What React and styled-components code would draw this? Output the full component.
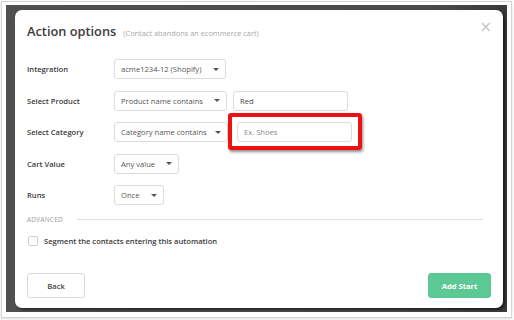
import React from "react";
import styled, { createGlobalStyle } from "styled-components";

const Global = createGlobalStyle`
  html, body { margin: 0; padding: 0; background: #fff; }
  body { font-family: "Open Sans", "Liberation Sans", sans-serif; width: 514px; height: 320px; overflow: hidden; }
  * { box-sizing: border-box; }
`;

const Frame = styled.div`
  position: relative;
  margin: 1px 0 0 1px;
  width: 511px;
  height: 317px;
  border: 1px solid #d4d4d4;
  box-shadow: 0 1px 2px rgba(0,0,0,0.15);
  background: #fff;
  padding: 3px 4px 4px 4px;
`;

const Backdrop = styled.div`
  width: 501px;
  height: 307px;
  background: linear-gradient(90deg, #505050 0%, #4a4a4a 85%, #3a3a3a 100%);
  padding: 5px 4px 4px 9px;
`;

const Modal = styled.div`
  position: relative;
  width: 488px;
  height: 298px;
  background: #fff;
  border-radius: 7px;
  box-shadow: 2px 2px 3px rgba(0,0,0,0.55);
  padding: 0 12px;
  display: flex;
  flex-direction: column;
`;

const Header = styled.div`
  display: flex;
  align-items: baseline;
  gap: 7px;
  height: 41px;
  padding-top: 12px;
`;

const Title = styled.h1`
  margin: 0;
  font-size: 12.8px;
  font-weight: 600;
  color: #3c3c3c;
`;

const Subtitle = styled.span`
  font-size: 7.4px;
  color: #a8a8a8;
`;

const Close = styled.span`
  position: absolute;
  right: 11px;
  top: 10px;
  font-size: 15px;
  color: #c4c4c4;
  font-family: "DejaVu Sans", sans-serif;
  line-height: 1;
`;

const Form = styled.div`
  display: grid;
  grid-template-columns: 87px 1fr;
  row-gap: 11.5px;
  margin-top: 8px;
  align-items: center;
`;

const Label = styled.div`
  font-size: 7.6px;
  font-weight: 600;
  color: #3a3a3a;
`;

const Controls = styled.div`
  display: flex;
  align-items: center;
  gap: ${p => p.$gap || 6}px;
  height: 20px;
`;

const SelectBox = styled.div`
  width: ${p => p.$w}px;
  height: 20px;
  border: 1px solid #dcdcdc;
  border-radius: 3px;
  display: flex;
  align-items: center;
  justify-content: space-between;
  padding: 0 6px 0 6px;
  font-size: 7.6px;
  color: #555;
  background: #fff;
`;

const Caret = styled.span`
  width: 0;
  height: 0;
  border-left: 3px solid transparent;
  border-right: 3px solid transparent;
  border-top: 3px solid #555;
`;

const Input = styled.div`
  width: 115px;
  height: 20px;
  border: 1px solid #dcdcdc;
  border-radius: 3px;
  display: flex;
  align-items: center;
  padding: 0 6px;
  font-size: 7.6px;
  color: ${p => (p.$placeholder ? "#8a8a8a" : "#444")};
  background: #fff;
`;

const Highlight = styled.div`
  position: relative;
  &::after {
    content: "";
    position: absolute;
    left: -9px;
    top: -9px;
    right: -10px;
    bottom: -8px;
    border: 4px solid #ee1111;
    border-radius: 3px;
    box-shadow: 1px 2px 3px rgba(0,0,0,0.45);
  }
`;

const Section = styled.div`
  display: flex;
  align-items: center;
  gap: 14px;
  margin-top: 10px;
  padding-right: 8px;
`;

const SectionLabel = styled.span`
  font-size: 6.4px;
  color: #999;
  letter-spacing: 0.3px;
`;

const Rule = styled.div`
  flex: 1;
  height: 1px;
  background: #e2e2e2;
`;

const CheckRow = styled.label`
  display: flex;
  align-items: center;
  gap: 6px;
  margin-top: 12px;
  margin-left: 1px;
  font-size: 7.6px;
  font-weight: 600;
  color: #3a3a3a;
`;

const Checkbox = styled.span`
  width: 10px;
  height: 10px;
  border: 1px solid #cfcfcf;
  border-radius: 2px;
  background: #fff;
`;

const Footer = styled.div`
  display: flex;
  justify-content: space-between;
  margin-top: 27px;
`;

const Button = styled.div`
  width: ${p => p.$w}px;
  height: 25px;
  border-radius: 3px;
  display: flex;
  align-items: center;
  justify-content: center;
  font-size: 7.6px;
  font-weight: ${p => (p.$primary ? 700 : 600)};
  color: ${p => (p.$primary ? "#fff" : "#444")};
  background: ${p => (p.$primary ? "#5cc995" : "#fff")};
  border: 1px solid ${p => (p.$primary ? "#5cc995" : "#d8d8d8")};
`;

function Select({ w, children }) {
  return (
    <SelectBox $w={w}>
      <span>{children}</span>
      <Caret />
    </SelectBox>
  );
}

export default function App() {
  return (
    <>
      <Global />
      <Frame>
        <Backdrop>
          <Modal>
            <Header>
              <Title>Action options</Title>
              <Subtitle>(Contact abandons an ecommerce cart)</Subtitle>
            </Header>
            <Close>×</Close>
            <Form>
              <Label>Integration</Label>
              <Controls>
                <Select w={112}>acme1234-12 (Shopify)</Select>
              </Controls>
              <Label>Select Product</Label>
              <Controls>
                <Select w={113}>Product name contains</Select>
                <Input>Red</Input>
              </Controls>
              <Label>Select Category</Label>
              <Controls $gap={9}>
                <Select w={114}>Category name contains</Select>
                <Highlight>
                  <Input $placeholder>Ex. Shoes</Input>
                </Highlight>
              </Controls>
              <Label>Cart Value</Label>
              <Controls>
                <Select w={65}>Any value</Select>
              </Controls>
              <Label>Runs</Label>
              <Controls>
                <Select w={50}>Once</Select>
              </Controls>
            </Form>
            <Section>
              <SectionLabel>ADVANCED</SectionLabel>
              <Rule />
            </Section>
            <CheckRow>
              <Checkbox />
              Segment the contacts entering this automation
            </CheckRow>
            <Footer>
              <Button $w={58}>Back</Button>
              <Button $w={63} $primary>Add Start</Button>
            </Footer>
          </Modal>
        </Backdrop>
      </Frame>
    </>
  );
}
